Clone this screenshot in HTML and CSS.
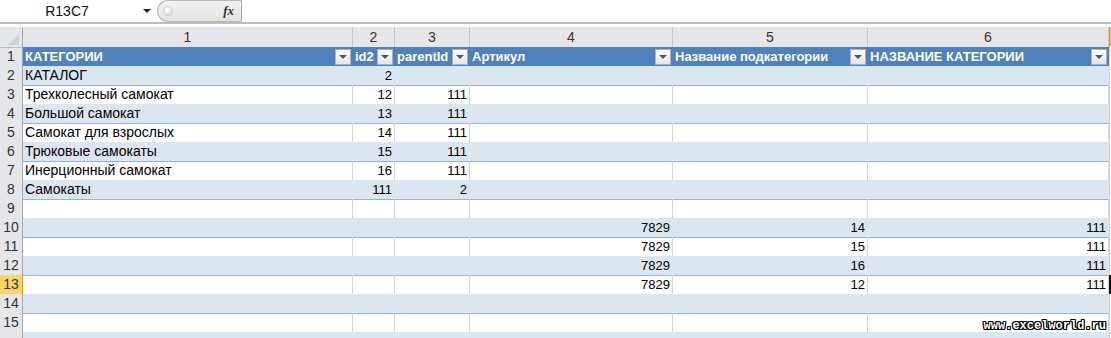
FILE: index.html
```html
<!DOCTYPE html>
<html lang="ru">
<head>
    <meta charset="UTF-8">
    <title>Книга1</title>
    <link rel="stylesheet" href="styles.css">
</head>
<body>
    <div class="formula_bar">
        <div class="namebox">R13C7</div>
        <div class="nb_arrow"><span class="tri"></span></div>
        <div class="pill">
            <span class="knob"></span>
            <span class="fx">fx</span>
        </div>
        <div class="formula_input"></div>
    </div>

    <div class="sheet">
        <div class="row hdr">
            <div class="rh corner"></div>
            <div class="ch">1</div>
            <div class="ch">2</div>
            <div class="ch">3</div>
            <div class="ch">4</div>
            <div class="ch">5</div>
            <div class="ch">6</div>
            <div class="ch sel"></div>
        </div>
        <div class="row th">
            <div class="rh">1</div>
            <div class="c"><span>КАТЕГОРИИ</span><i class="fb"></i></div>
            <div class="c"><span>id2</span><i class="fb"></i></div>
            <div class="c"><span>parentId</span><i class="fb"></i></div>
            <div class="c"><span>Артикул</span><i class="fb"></i></div>
            <div class="c"><span>Название подкатегории</span><i class="fb"></i></div>
            <div class="c"><span>НАЗВАНИЕ КАТЕГОРИИ</span><i class="fb"></i></div>
            <div class="c out"></div>
        </div>
        <div class="row band">
            <div class="rh">2</div>
            <div class="c">КАТАЛОГ</div>
            <div class="c num">2</div>
            <div class="c num"></div>
            <div class="c"></div>
            <div class="c"></div>
            <div class="c"></div>
            <div class="c out"></div>
        </div>
        <div class="row">
            <div class="rh">3</div>
            <div class="c">Трехколесный самокат</div>
            <div class="c num">12</div>
            <div class="c num">111</div>
            <div class="c"></div>
            <div class="c"></div>
            <div class="c"></div>
            <div class="c out"></div>
        </div>
        <div class="row band">
            <div class="rh">4</div>
            <div class="c">Большой самокат</div>
            <div class="c num">13</div>
            <div class="c num">111</div>
            <div class="c"></div>
            <div class="c"></div>
            <div class="c"></div>
            <div class="c out"></div>
        </div>
        <div class="row">
            <div class="rh">5</div>
            <div class="c">Самокат для взрослых</div>
            <div class="c num">14</div>
            <div class="c num">111</div>
            <div class="c"></div>
            <div class="c"></div>
            <div class="c"></div>
            <div class="c out"></div>
        </div>
        <div class="row band">
            <div class="rh">6</div>
            <div class="c">Трюковые самокаты</div>
            <div class="c num">15</div>
            <div class="c num">111</div>
            <div class="c"></div>
            <div class="c"></div>
            <div class="c"></div>
            <div class="c out"></div>
        </div>
        <div class="row">
            <div class="rh">7</div>
            <div class="c">Инерционный самокат</div>
            <div class="c num">16</div>
            <div class="c num">111</div>
            <div class="c"></div>
            <div class="c"></div>
            <div class="c"></div>
            <div class="c out"></div>
        </div>
        <div class="row band">
            <div class="rh">8</div>
            <div class="c">Самокаты</div>
            <div class="c num">111</div>
            <div class="c num">2</div>
            <div class="c"></div>
            <div class="c"></div>
            <div class="c"></div>
            <div class="c out"></div>
        </div>
        <div class="row">
            <div class="rh">9</div>
            <div class="c"></div>
            <div class="c"></div>
            <div class="c"></div>
            <div class="c"></div>
            <div class="c"></div>
            <div class="c"></div>
            <div class="c out"></div>
        </div>
        <div class="row band">
            <div class="rh">10</div>
            <div class="c"></div>
            <div class="c"></div>
            <div class="c"></div>
            <div class="c num">7829</div>
            <div class="c num">14</div>
            <div class="c num">111</div>
            <div class="c out"></div>
        </div>
        <div class="row">
            <div class="rh">11</div>
            <div class="c"></div>
            <div class="c"></div>
            <div class="c"></div>
            <div class="c num">7829</div>
            <div class="c num">15</div>
            <div class="c num">111</div>
            <div class="c out"></div>
        </div>
        <div class="row band">
            <div class="rh">12</div>
            <div class="c"></div>
            <div class="c"></div>
            <div class="c"></div>
            <div class="c num">7829</div>
            <div class="c num">16</div>
            <div class="c num">111</div>
            <div class="c out"></div>
        </div>
        <div class="row">
            <div class="rh sel">13</div>
            <div class="c"></div>
            <div class="c"></div>
            <div class="c"></div>
            <div class="c num">7829</div>
            <div class="c num">12</div>
            <div class="c num">111</div>
            <div class="c out active"></div>
        </div>
        <div class="row band">
            <div class="rh">14</div>
            <div class="c"></div>
            <div class="c"></div>
            <div class="c"></div>
            <div class="c"></div>
            <div class="c"></div>
            <div class="c"></div>
            <div class="c out"></div>
        </div>
        <div class="row">
            <div class="rh">15</div>
            <div class="c"></div>
            <div class="c"></div>
            <div class="c"></div>
            <div class="c"></div>
            <div class="c"></div>
            <div class="c"></div>
            <div class="c out"></div>
        </div>
        <!-- row 16: only the top edge is visible -->
        <div class="row band">
            <div class="rh"></div>
            <div class="c"></div>
            <div class="c"></div>
            <div class="c"></div>
            <div class="c"></div>
            <div class="c"></div>
            <div class="c"></div>
            <div class="c out"></div>
        </div>
    </div>

    <div class="watermark">www.excelworld.ru</div>
</body>
</html>
```

FILE: styles.css
```css
* {
    box-sizing: border-box;
}
body {
    margin: 0;
    height: 338px;
    overflow: hidden;
    position: relative;
    background: #fff;
    font-family: "Liberation Sans", Arial, sans-serif;
    font-size: 14px;
    color: #000;
}

/* formula bar */
.formula_bar {
    display: flex;
    height: 24px;
    border-bottom: 2px solid #bcbcbc;
    margin-bottom: 3px;
}
.namebox {
    width: 140px;
    padding-right: 6px;
    display: flex;
    align-items: center;
    justify-content: center;
    font-size: 14px;
    color: #111;
}
.nb_arrow {
    width: 14px;
    display: flex;
    align-items: center;
    justify-content: center;
}
.tri {
    border-left: 4px solid transparent;
    border-right: 4px solid transparent;
    border-top: 4px solid #222;
}
.pill {
    margin-left: 3px;
    width: 85px;
    height: 22px;
    border: 1px solid #b8b8b8;
    border-right-color: #a8a8a8;
    border-radius: 11px 0 0 11px;
    background: linear-gradient(#f2f2f2, #e2e2e2);
    display: flex;
    align-items: center;
    justify-content: space-between;
    padding: 0 7px 0 5px;
}
.knob {
    width: 10px;
    height: 10px;
    border-radius: 50%;
    background: radial-gradient(circle at 40% 40%, #ffffff, #d2d2d2);
    border: 1px solid #d0d0d0;
}
.fx {
    font-family: "Liberation Serif", serif;
    font-style: italic;
    font-weight: bold;
    font-size: 13px;
    color: #333;
}
.formula_input {
    flex: 1;
}

/* sheet */
.row {
    display: grid;
    grid-template-columns: 23px 330px 42px 75px 203px 195px 241px 2px;
    height: 19px;
}
.row.hdr {
    height: 20px;
}
.ch {
    background: #e4e6ea;
    border-right: 1px solid #c5c8cd;
    border-bottom: 1px solid #b9bdc3;
    text-align: center;
    line-height: 20px;
    font-size: 14px;
    color: #333;
}
.ch.sel {
    background: #f7c86f;
    border-left: 1px solid #e2931f;
    border-right: none;
}
.rh {
    background: #e4e6ea;
    border-right: 1px solid #9fa8b4;
    border-bottom: 1px solid #c5c8cd;
    text-align: center;
    line-height: 19px;
    font-size: 14px;
    color: #333;
}
.rh.sel {
    background: #fbd46a;
    border-right-color: #e2931f;
    border-bottom-color: #e2931f;
}
.corner {
    position: relative;
    border-bottom-color: #b9bdc3;
}
.corner::after {
    content: "";
    position: absolute;
    right: 3px;
    bottom: 2px;
    border-left: 11px solid transparent;
    border-bottom: 11px solid #cfd2d6;
}
.c {
    border-right: 1px solid #d4d4d4;
    border-bottom: 1px solid #95b3d7;
    padding: 0 2px;
    line-height: 19px;
    white-space: nowrap;
    overflow: hidden;
}
.num {
    text-align: right;
    padding-right: 2px;
    font-size: 13px;
}
.band .c {
    background: #dce6f1;
    border-right-color: #dce6f1;
}
.c.out,
.band .c.out {
    background: #fff;
    border-right: none;
    border-left: 1px solid #d4d4d4;
    border-bottom-color: #d4d4d4;
}
.c.active {
    border-left: 2px solid #111;
}

/* table header row */
.th .c {
    background: #4f81bd;
    border-right-color: #4f81bd;
    color: #fff;
    font-weight: bold;
    font-size: 13px;
    display: flex;
    align-items: center;
    justify-content: space-between;
    padding-right: 1px;
}
.th .c.out {
    background: #fff;
}
.fb {
    width: 16px;
    height: 16px;
    flex-shrink: 0;
    border: 1px solid #a8b3c0;
    background: linear-gradient(#ffffff, #e3e5e8);
    display: flex;
    align-items: center;
    justify-content: center;
}
.fb::after {
    content: "";
    border-left: 4px solid transparent;
    border-right: 4px solid transparent;
    border-top: 4px solid #555;
}

.watermark {
    position: absolute;
    right: 5px;
    bottom: 5px;
    font-family: "Liberation Mono", monospace;
    font-weight: bold;
    font-size: 12px;
    color: #fff;
    text-shadow: 1px 0 0 #000, -1px 0 0 #000, 0 1px 0 #000, 0 -1px 0 #000,
                 1px 1px 0 #000, -1px -1px 0 #000, 1px -1px 0 #000, -1px 1px 0 #000;
}
```
